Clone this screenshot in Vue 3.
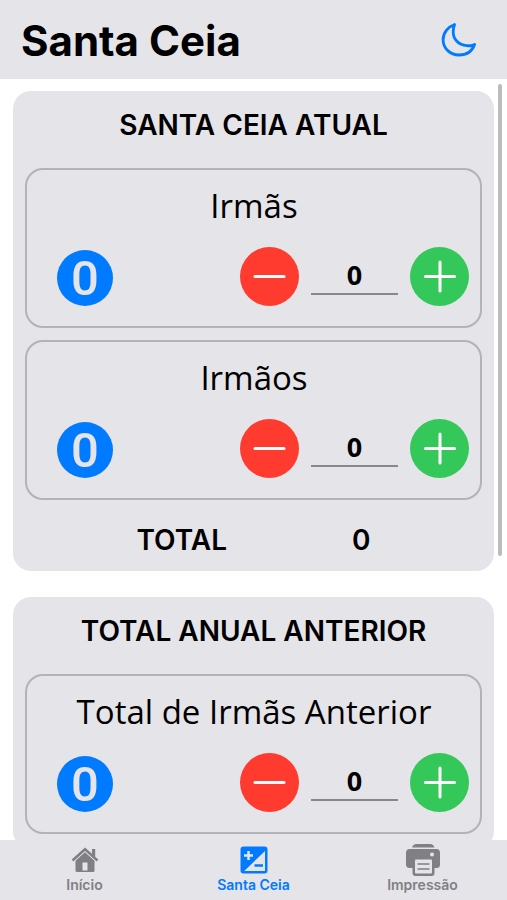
<script setup>
import { ref, computed } from 'vue'

const current = ref([
  { id: 'irmas', label: 'Irmãs', value: 0 },
  { id: 'irmaos', label: 'Irmãos', value: 0 },
])
const previous = ref([
  { id: 'irmas-anterior', label: 'Total de Irmãs Anterior', value: 0 },
])
const total = computed(() => current.value.reduce((sum, c) => sum + Number(c.value), 0))
const groups = computed(() => [
  { title: 'SANTA CEIA ATUAL', counters: current.value, total: total.value },
  { title: 'TOTAL ANUAL ANTERIOR', counters: previous.value, total: null },
])

function step(counter, amount) {
  counter.value = Math.max(0, Number(counter.value) + amount)
}
</script>

<template>
  <div class="screen">
    <header class="topbar">
      <h1>Santa Ceia</h1>
      <button class="theme" type="button" aria-label="Modo escuro">
        <svg viewBox="0 0 36 36" width="36" height="36">
          <path d="M13.6 2.5 C7 4.8 2.1 10.6 2.1 17.7 C2.1 26.4 9.3 33 18 33 C25.4 33 31.2 29 33.6 22.4 C30.8 23.7 28 23.9 25.8 23.7 C17.3 22.9 12.3 17.3 12.2 10 C12.1 7.3 12.6 4.8 13.6 2.5 Z" />
        </svg>
      </button>
    </header>

    <main class="content">
      <section v-for="g in groups" :key="g.title" class="card">
        <h2>{{ g.title }}</h2>
        <div class="counters">
          <div v-for="c in g.counters" :key="c.id" class="counter">
            <label :for="c.id">{{ c.label }}</label>
            <div class="row">
              <span class="badge">{{ c.value }}</span>
              <div class="stepper">
                <button class="round minus" type="button" aria-label="Diminuir" @click="step(c, -1)">
                  <svg viewBox="0 0 59 59"><path d="M15 29.500H44" /></svg>
                </button>
                <input :id="c.id" v-model="c.value" type="text" inputmode="numeric" />
                <button class="round plus" type="button" aria-label="Aumentar" @click="step(c, 1)">
                  <svg viewBox="0 0 59 59"><path d="M15.500 29.500H44.500M30 15V44" /></svg>
                </button>
              </div>
            </div>
          </div>
        </div>
        <p v-if="g.total !== null" class="total">
          <span>TOTAL</span><span>{{ g.total }}</span>
        </p>
      </section>
      <div class="scrollbar"></div>
    </main>

    <nav class="tabs">
      <a href="#inicio">
        <svg viewBox="0 0 36 32" width="36" height="32">
          <path class="line" d="M5.500 16.500L18 5.300L30.500 16.500" />
          <path d="M25 5h3.200v8L25 10.200z" />
          <path fill-rule="evenodd" d="M18 8.300L27.500 16.800V26.500Q27.500 28 26 28H10Q8.500 28 8.500 26.500V16.800zM15.500 18.500V26.500H20.500V18.500z" />
        </svg>
        <span>Início</span>
      </a>
      <a href="#santa-ceia" class="active" aria-current="page">
        <svg viewBox="0 0 36 32" width="36" height="32">
          <rect x="4.500" y="2.500" width="27" height="27" rx="3" />
          <path class="cut" d="M29 7V27H8.200z" />
          <path class="plus-mark" d="M8 11.500H17M12.500 7V16" />
          <path class="line" d="M18.500 21.500H27" />
        </svg>
        <span>Santa Ceia</span>
      </a>
      <a href="#impressao">
        <svg viewBox="0 0 36 32" width="36" height="32">
          <path d="M7 3.500Q8 0 11.500 0H25Q28.500 0 29.500 3.500z" />
          <path d="M5 5H31.500Q35 5 35 9V20.500Q35 24 31.500 24H29.500V29Q29.500 32 26.500 32H10.500Q7.500 32 7.500 29V24H5Q1 24 1 20.500V9Q1 5 5 5z" />
          <rect class="cut" x="10" y="15.500" width="17" height="14" rx="1" />
          <circle class="cut" cx="27" cy="10.500" r="2" />
          <path class="thin" d="M12.500 20H24.500M12.500 25H24.500" />
        </svg>
        <span>Impressão</span>
      </a>
    </nav>
  </div>
</template>

<style>
body {
  margin: 0;
  background: #fff;
}
</style>

<style scoped>
.screen {
  display: flex;
  flex-direction: column;
  height: 100vh;
  font-family: Inter, "Liberation Sans", sans-serif;
  color: #000;
}
.screen * {
  box-sizing: border-box;
}
.topbar {
  display: flex;
  flex: none;
  align-items: center;
  justify-content: space-between;
  padding: 15px 30px 14px 21px;
  background: #e5e4e9;
}
h1 {
  margin: 0;
  padding-top: 2px;
  font-size: 42px;
  line-height: 48px;
  font-weight: 700;
}
button {
  padding: 0;
  border: 0;
  cursor: pointer;
}
.theme {
  height: 36px;
  background: none;
}
.theme svg {
  display: block;
  fill: none;
  stroke: #007aff;
  stroke-width: 2.8;
  stroke-linejoin: round;
}
.content {
  position: relative;
  display: flex;
  flex: 1;
  flex-direction: column;
  gap: 26px;
  min-height: 0;
  padding: 12px 13px 0;
  overflow: hidden;
}
.scrollbar {
  position: absolute;
  top: 5px;
  right: 5px;
  width: 4px;
  height: 62%;
  border-radius: 2px;
  background: #bcbcbe;
}
.card {
  flex: none;
  padding: 18px 12px 15px;
  border-radius: 18px;
  background: #e5e4e9;
}
h2 {
  margin: 0 0 27px;
  font-size: 28px;
  line-height: 32px;
  font-weight: 600;
  text-align: center;
}
.counters {
  display: flex;
  flex-direction: column;
  gap: 12px;
}
.counter {
  padding: 16px 11px 20px 30px;
  border: 2px solid #b3b2b7;
  border-radius: 18px;
}
.counter label {
  display: block;
  margin-right: 18px;
  font-family: "Open Sans", "Noto Sans", sans-serif;
  font-size: 33px;
  line-height: 40px;
  text-align: center;
}
.row {
  display: flex;
  align-items: flex-end;
  justify-content: space-between;
  padding-top: 21px;
}
.badge {
  width: 56px;
  height: 56px;
  border-radius: 50%;
  background: #007aff;
  color: #e5e4e9;
  font-family: Roboto, "Open Sans", sans-serif;
  font-size: 49px;
  line-height: 58px;
  font-weight: 500;
  text-align: center;
}
.stepper {
  display: flex;
  align-items: center;
  gap: 12px;
}
.round {
  width: 59px;
  height: 59px;
  border-radius: 50%;
}
.round svg {
  display: block;
  fill: none;
  stroke: #fff;
  stroke-width: 3;
  stroke-linecap: round;
}
.minus {
  background: #ff3b30;
}
.plus {
  background: #34c759;
}
input {
  width: 87px;
  height: 36px;
  padding: 0 0 3px;
  border: 0;
  border-bottom: 2px solid #88888c;
  border-radius: 0;
  background: none;
  color: #000;
  font: 700 27px/30px "Open Sans", "Noto Sans", sans-serif;
  text-align: center;
}
.total {
  display: flex;
  justify-content: center;
  gap: 125px;
  margin: 24px 0 0;
  font-size: 28px;
  line-height: 32px;
  font-weight: 600;
}
.tabs {
  display: grid;
  flex: none;
  grid-template-columns: repeat(3, 1fr);
  padding: 4px 0 7px;
  background: #e5e4e9;
}
.tabs a {
  display: flex;
  flex-direction: column;
  align-items: center;
  gap: 1px;
  color: #808084;
  font-size: 14px;
  line-height: 16px;
  font-weight: 600;
  text-decoration: none;
}
.tabs a.active {
  color: #007aff;
}
.tabs svg {
  fill: currentColor;
}
.tabs .line {
  fill: none;
  stroke: currentColor;
  stroke-width: 2.5;
}
.tabs .thin {
  fill: none;
  stroke: currentColor;
  stroke-width: 1.6;
}
.tabs .cut {
  fill: #e5e4e9;
}
.tabs .plus-mark {
  fill: none;
  stroke: #e5e4e9;
  stroke-width: 2.5;
}
</style>
